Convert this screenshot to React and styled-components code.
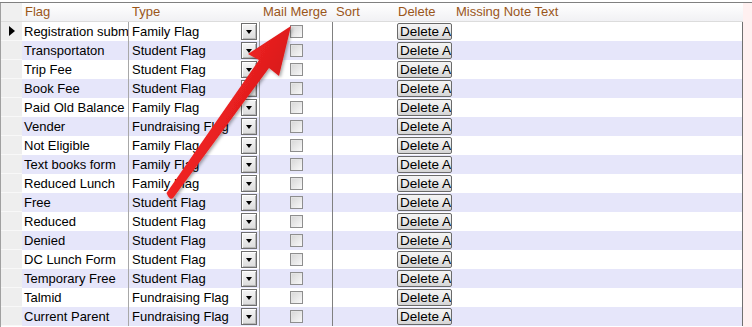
import React from "react";
import styled, { createGlobalStyle } from "styled-components";

const Global = createGlobalStyle`
  html, body { margin: 0; padding: 0; background: #ffffff; }
  body { font-family: "Liberation Sans", Arial, sans-serif; }
`;

const COLS = "21px 107px 131px 73px 62px 58px 290px";

const Page = styled.div`
  position: relative;
  width: 752px;
  height: 327px;
  overflow: hidden;
  background: #ffffff;
  padding-top: 2px;
  box-sizing: border-box;
`;

const Frame = styled.div`
  display: flex;
  border-top: 1px solid #808080;
  height: 100%;
`;

const Grid = styled.div`
  width: 743px;
  border-left: 1px solid #a0a0a0;
  box-sizing: border-box;
  display: flex;
  flex-direction: column;
`;

const Filler = styled.div`
  flex: 1;
  background: #fff0f0;
`;

const HeaderRow = styled.div`
  display: grid;
  grid-template-columns: ${COLS};
  height: 18px;
  background: linear-gradient(#ffffff, #f1f1f4);
  border-bottom: 1px solid #dcdcdc;
`;

const HeaderCell = styled.div`
  font-size: 13px;
  line-height: 18px;
  color: #9a561a;
  padding-left: ${(p) => p.$pl ?? 3}px;
  white-space: nowrap;
  overflow: hidden;
  background: ${(p) => (p.$corner ? "#f0f0f0" : "transparent")};
`;

const Row = styled.div`
  display: grid;
  grid-template-columns: ${COLS};
  height: 19px;
  background: ${(p) => (p.$alt ? "#e6e6fa" : "#ffffff")};
`;

const RowHead = styled.div`
  background: #eeeeee;
  border-bottom: 1px solid #f8f8f8;
  box-sizing: border-box;
  display: flex;
  align-items: center;
  padding-left: 8px;
`;

const Pointer = styled.span`
  width: 0;
  height: 0;
  border-top: 5px solid transparent;
  border-bottom: 5px solid transparent;
  border-left: 6px solid #000000;
`;

const Cell = styled.div`
  font-size: 13px;
  line-height: 19px;
  color: #000000;
  padding-left: ${(p) => p.$pl ?? 2}px;
  white-space: nowrap;
  overflow: hidden;
  box-sizing: border-box;
  border-right: ${(p) => (p.$line ? `1px solid ${p.$line}` : "none")};
`;

const TypeCell = styled(Cell)`
  display: flex;
  align-items: center;
  justify-content: space-between;
  padding-left: 3px;
  padding-right: 2px;
`;

const DropButton = styled.div`
  width: 16px;
  height: 17px;
  box-sizing: border-box;
  border: 1px solid #6e6e6e;
  box-shadow: inset 1px 1px 0 #ffffff, inset -1px -1px 0 #b8b8b8;
  background: linear-gradient(#f6f6f6, #dcdcdc);
  display: flex;
  align-items: center;
  justify-content: center;
  &::after {
    content: "";
    width: 0;
    height: 0;
    border-left: 3.5px solid transparent;
    border-right: 3.5px solid transparent;
    border-top: 4px solid #000000;
    margin-top: 1px;
  }
`;

const CheckCell = styled(Cell)`
  display: flex;
  align-items: center;
  justify-content: center;
  padding-left: 1px;
`;

const Check = styled.div`
  width: 13px;
  height: 13px;
  box-sizing: border-box;
  border: 1px solid #8e8e8e;
  background: linear-gradient(135deg, #d6d6d6, #f8f8f8);
  box-shadow: inset 1px 1px 0 #e4e4e4;
`;

const DeleteCell = styled(Cell)`
  display: flex;
  align-items: center;
  padding-left: 2px;
`;

const DeleteButton = styled.div`
  width: 55px;
  height: 17px;
  box-sizing: border-box;
  border: 1px solid #6a6a6a;
  border-radius: 2px;
  background: linear-gradient(#f4f4f4 0%, #eaeaea 50%, #d4d4d4 100%);
  font-size: 13.5px;
  line-height: 15px;
  padding-left: 2px;
  overflow: hidden;
  white-space: nowrap;
  color: #000000;
`;

const Arrow = styled.svg`
  position: absolute;
  left: 0;
  top: 0;
  pointer-events: none;
`;

const rows = [
  ["Registration submitted", "Family Flag"],
  ["Transportaton", "Student Flag"],
  ["Trip Fee", "Student Flag"],
  ["Book Fee", "Student Flag"],
  ["Paid Old Balance", "Family Flag"],
  ["Vender", "Fundraising Flag"],
  ["Not Eligible", "Family Flag"],
  ["Text books form", "Family Flag"],
  ["Reduced Lunch", "Family Flag"],
  ["Free", "Student Flag"],
  ["Reduced", "Student Flag"],
  ["Denied", "Student Flag"],
  ["DC Lunch Form", "Student Flag"],
  ["Temporary Free", "Student Flag"],
  ["Talmid", "Fundraising Flag"],
  ["Current Parent", "Fundraising Flag"],
];

export default function App() {
  return (
    <>
      <Global />
      <Page>
        <Frame>
          <Grid>
            <HeaderRow>
              <HeaderCell $corner />
              <HeaderCell>Flag</HeaderCell>
              <HeaderCell>Type</HeaderCell>
              <HeaderCell>Mail Merge</HeaderCell>
              <HeaderCell>Sort</HeaderCell>
              <HeaderCell>Delete</HeaderCell>
              <HeaderCell>Missing Note Text</HeaderCell>
            </HeaderRow>
            {rows.map(([flag, type], i) => (
              <Row key={flag} $alt={i % 2 === 1}>
                <RowHead>{i === 0 && <Pointer />}</RowHead>
                <Cell $line="#a8a8a8">{flag}</Cell>
                <TypeCell $line="#a0a0a0">
                  <span>{type}</span>
                  <DropButton />
                </TypeCell>
                <CheckCell $line="#808080">
                  <Check />
                </CheckCell>
                <Cell />
                <DeleteCell>
                  <DeleteButton>Delete All</DeleteButton>
                </DeleteCell>
                <Cell $line="#707070" />
              </Row>
            ))}
          </Grid>
          <Filler />
        </Frame>
        <Arrow width="752" height="327" viewBox="0 0 752 327">
          <defs>
            <linearGradient id="ag" x1="0" y1="0" x2="1" y2="0.7">
              <stop offset="0" stopColor="#ff4747" />
              <stop offset="0.5" stopColor="#ee2222" />
              <stop offset="1" stopColor="#c41414" />
            </linearGradient>
            <filter id="sh" x="-20%" y="-20%" width="140%" height="140%">
              <feDropShadow dx="1.5" dy="1.5" stdDeviation="1.5" floodColor="#000" floodOpacity="0.35" />
            </filter>
          </defs>
          <path
            filter="url(#sh)"
            fill="url(#ag)"
            d="M291 26 L279 76 L269 68 L173.5 197.5 Q170 201.5 166.5 193 L259 60 L248 54 Z"
          />
        </Arrow>
      </Page>
    </>
  );
}
